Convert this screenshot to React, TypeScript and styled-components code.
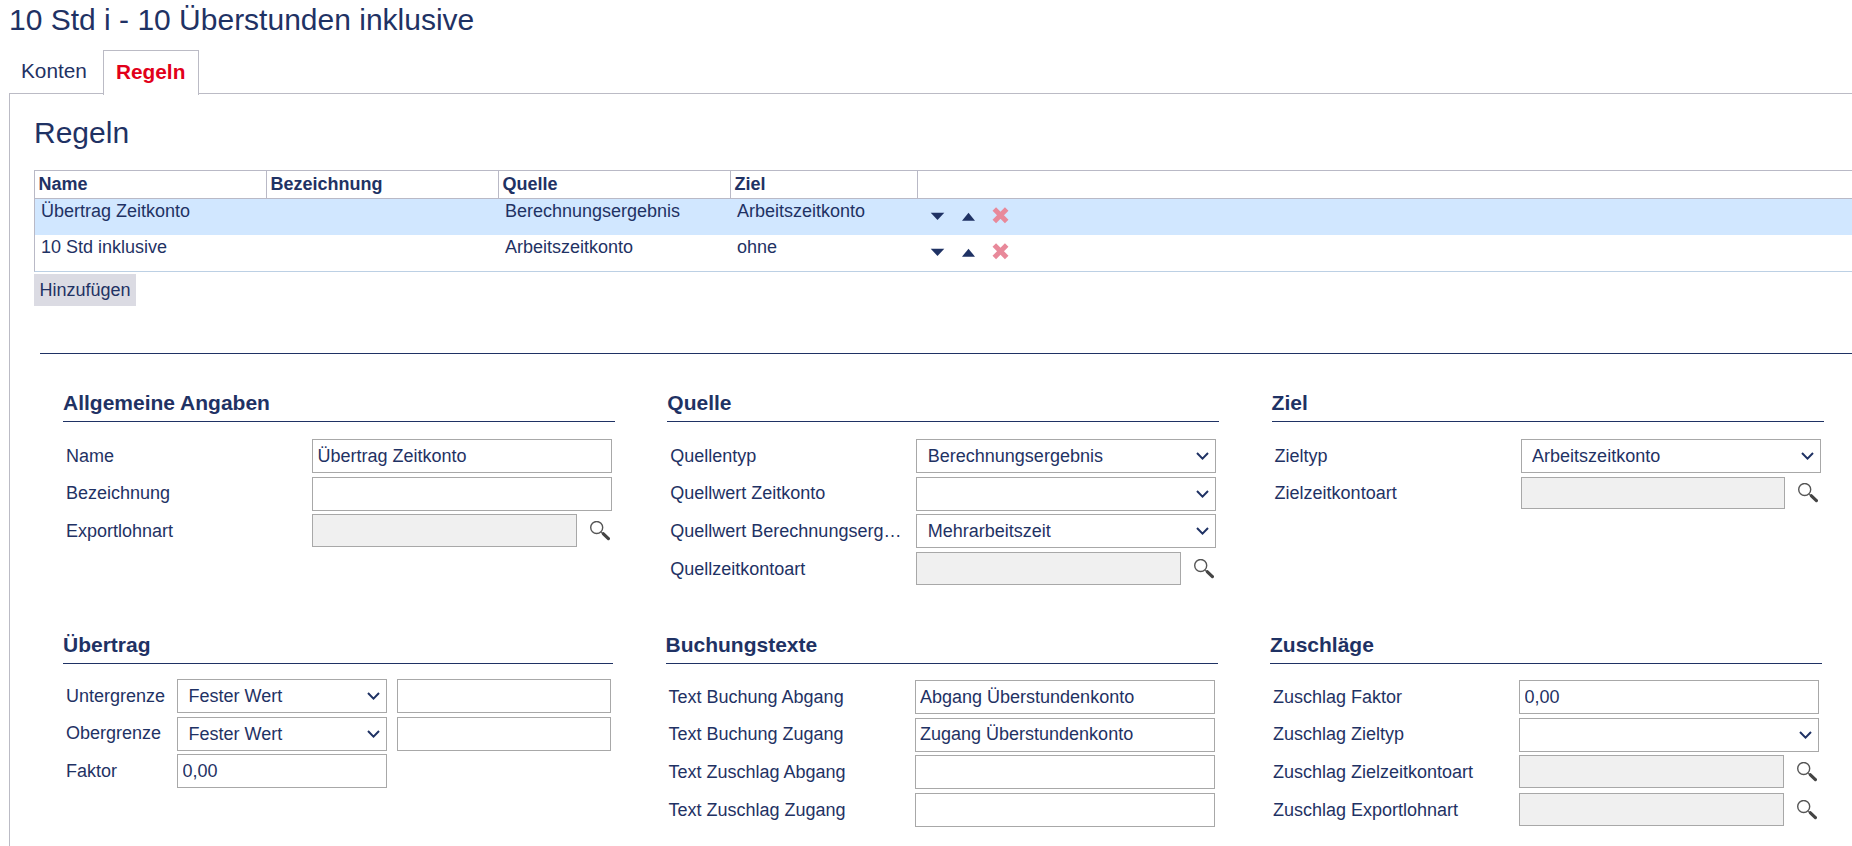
import React from "react";
import styled, { createGlobalStyle } from "styled-components";

const INK = "#1f3264";

const Global = createGlobalStyle`
  html, body { margin: 0; padding: 0; background: #fff; }
  body { font-family: "Liberation Sans", Arial, sans-serif; color: ${INK}; font-size: 18px; }
`;

const Page = styled.div`
  width: 1852px;
  height: 846px;
  overflow: hidden;
  background: #fff;
`;
const Title = styled.h1`
  margin: 0;
  padding: 3px 0 0 9px;
  height: 50px;
  box-sizing: border-box;
  font-size: 30px;
  line-height: 34px;
  font-weight: 400;
`;
const Tabs = styled.div`
  display: flex;
  padding-left: 9px;
  height: 43px;
`;
const Tab = styled.div<{ $active?: boolean }>`
  box-sizing: border-box;
  height: ${(p) => (p.$active ? "45px" : "43px")};
  width: ${(p) => (p.$active ? "96px" : "94px")};
  padding-left: 12px;
  padding-top: 9px;
  font-size: 20.8px;
  line-height: 24px;
  font-weight: ${(p) => (p.$active ? 700 : 400)};
  color: ${(p) => (p.$active ? "#e2001a" : INK)};
  background: #fff;
  position: relative;
  z-index: 1;
  border: ${(p) => (p.$active ? "1px solid #bbbbc5" : "none")};
  border-bottom: none;
`;
const Panel = styled.div`
  margin-left: 9px;
  height: 753px;
  box-sizing: border-box;
  border-top: 1px solid #bbbbc5;
  border-left: 1px solid #bbbbc5;
  padding: 22px 0 0 24px;
`;
const PanelTitle = styled.h2`
  margin: 0 0 19.5px;
  font-size: 30px;
  line-height: 34px;
  font-weight: 400;
`;
const RuleTable = styled.table`
  table-layout: fixed;
  width: 1818px;
  border-collapse: separate;
  border-spacing: 0;
  border-left: 1px solid #b9b9c6;
  border-bottom: 1px solid #bcd0e4;
  color: ${INK};
`;
const HeadCell = styled.th<{ $w?: number }>`
  width: ${(p) => (p.$w ? `${p.$w}px` : "auto")};
  box-sizing: border-box;
  height: 29px;
  padding: 3px 0 0 3.5px;
  text-align: left;
  vertical-align: top;
  font-size: 18px;
  line-height: 21px;
  font-weight: 700;
  border-top: 1px solid #b9b9c6;
  border-bottom: 1px solid #b9b9c6;
  border-right: ${(p) => (p.$w ? "1px solid #b9b9c6" : "none")};
`;
const Row = styled.tr<{ $selected?: boolean }>`
  background: ${(p) => (p.$selected ? "#d1e7ff" : "#fff")};
`;
const Cell = styled.td`
  height: 36px;
  box-sizing: border-box;
  padding: 2px 0 0 6px;
  vertical-align: top;
  font-size: 18px;
  line-height: 21px;
`;
const ActionCell = styled.td`
  height: 36px;
  box-sizing: border-box;
  padding: 8px 0 0 12px;
  vertical-align: top;
`;
const Actions = styled.div`
  display: flex;
  gap: 14px;
`;
const ActionIcon = styled.svg`
  display: block;
  width: 17px;
  height: 17px;
`;
const AddButton = styled.button`
  display: block;
  margin: 2.5px 0 0;
  width: 102px;
  height: 32px;
  padding: 0;
  border: none;
  background: #dbdbe3;
  color: ${INK};
  font: 18px/21px "Liberation Sans", Arial, sans-serif;
`;
const Divider = styled.div`
  margin: 47px 0 0 6px;
  height: 1px;
  background: ${INK};
`;
const FormRow = styled.div<{ $gap: number; $first?: boolean }>`
  display: flex;
  gap: ${(p) => p.$gap}px;
  margin-left: 29px;
  margin-top: ${(p) => (p.$first ? "37px" : "47px")};
`;
const Section = styled.section<{ $w: number }>`
  width: ${(p) => p.$w}px;
  flex: none;
`;
const SectionTitle = styled.h3`
  margin: 0;
  box-sizing: border-box;
  height: 31px;
  border-bottom: 1px solid ${INK};
  font-size: 21px;
  line-height: 24px;
  font-weight: 700;
`;
const FieldList = styled.div<{ $top: number }>`
  display: flex;
  flex-direction: column;
  gap: 3.7px;
  padding-top: ${(p) => p.$top}px;
`;
const Field = styled.div`
  display: grid;
  grid-template-columns: 249px 300px;
  height: 34px;
  align-items: start;
`;
const CarryField = styled.div`
  display: grid;
  grid-template-columns: 114px 210px 224px;
  height: 34px;
  align-items: start;
`;
const Label = styled.label`
  display: block;
  padding: 5.5px 10px 0 3px;
  line-height: 22px;
  font-size: 18px;
  white-space: nowrap;
  overflow: hidden;
  text-overflow: ellipsis;
`;
const TextInput = styled.input`
  box-sizing: border-box;
  display: block;
  width: 100%;
  height: 34px;
  margin: 0;
  padding: 0 0 0 4.5px;
  border: 1px solid #a8a8a8;
  border-radius: 0;
  outline: none;
  background: #fff;
  color: ${INK};
  font: 18px "Liberation Sans", Arial, sans-serif;
`;
const CarryValue = styled(TextInput)`
  margin-left: 10px;
  width: calc(100% - 10px);
`;
const LookupWrap = styled.div`
  display: flex;
  width: 100%;
`;
const LockedInput = styled.input`
  box-sizing: border-box;
  display: block;
  width: 264.5px;
  height: 32.5px;
  margin: 0;
  padding: 0;
  border: 1px solid #a8a8a8;
  border-radius: 0;
  background: #f0f0f0;
`;
const SearchIcon = styled.svg`
  display: block;
  width: 20px;
  height: 20px;
  margin: 6.5px 0 0 13px;
`;
const SelectWrap = styled.div`
  position: relative;
  width: 100%;
  height: 34px;
`;
const Select = styled.select`
  box-sizing: border-box;
  display: block;
  width: 100%;
  height: 34px;
  margin: 0;
  padding: 0 24px 0 10.5px;
  appearance: none;
  border: 1px solid #a8a8a8;
  border-radius: 0;
  outline: none;
  background: #fff;
  color: ${INK};
  font: 18px "Liberation Sans", Arial, sans-serif;
`;
const Chevron = styled.svg`
  position: absolute;
  right: 7px;
  top: 13px;
  width: 13px;
  height: 8px;
  pointer-events: none;
`;

const DownIcon = () => (
  <ActionIcon viewBox="0 0 17 17">
    <polygon points="0.7,5.7 14.3,5.7 7.5,13" fill={INK} />
  </ActionIcon>
);
const UpIcon = () => (
  <ActionIcon viewBox="0 0 17 17">
    <polygon points="1,13.7 14,13.7 7.5,5.7" fill={INK} />
  </ActionIcon>
);
const RemoveIcon = () => (
  <ActionIcon viewBox="0 0 17 17">
    <path d="M2.3 2 L14.7 14.4 M14.7 2 L2.3 14.4" stroke="#e8899a" strokeWidth="5" fill="none" />
  </ActionIcon>
);
const Magnifier = () => (
  <SearchIcon viewBox="0 0 20 20">
    <circle cx="6.7" cy="6.5" r="6" fill="#fff" stroke="#555" strokeWidth="1.4" />
    <path d="M10.8 10.8 L13 12.8" stroke="#666" strokeWidth="1.5" fill="none" />
    <path d="M13.4 12.8 L18.4 17.6" stroke="#444" strokeWidth="3.2" strokeLinecap="round" fill="none" />
  </SearchIcon>
);

const DropDown = ({ value }: { value: string }) => (
  <SelectWrap>
    <Select defaultValue={value}>
      <option value={value}>{value}</option>
    </Select>
    <Chevron viewBox="0 0 13 8">
      <polyline points="1,1 6.5,6.6 12,1" fill="none" stroke={INK} strokeWidth="2" />
    </Chevron>
  </SelectWrap>
);
const Lookup = () => (
  <LookupWrap>
    <LockedInput disabled />
    <Magnifier />
  </LookupWrap>
);

type FieldDef = { label: string; kind: "text" | "select" | "lookup"; value?: string };

const FormField = ({ label, kind, value = "" }: FieldDef) => (
  <Field>
    <Label>{label}</Label>
    {kind === "text" && <TextInput readOnly value={value} />}
    {kind === "select" && <DropDown value={value} />}
    {kind === "lookup" && <Lookup />}
  </Field>
);

const FormSection = ({ title, w, top, fields }: { title: string; w: number; top: number; fields: FieldDef[] }) => (
  <Section $w={w}>
    <SectionTitle>{title}</SectionTitle>
    <FieldList $top={top}>
      {fields.map((f) => (
        <FormField key={f.label} {...f} />
      ))}
    </FieldList>
  </Section>
);

const rules = [
  { name: "Übertrag Zeitkonto", source: "Berechnungsergebnis", target: "Arbeitszeitkonto", selected: true },
  { name: "10 Std inklusive", source: "Arbeitszeitkonto", target: "ohne", selected: false },
];

export default function App() {
  return (
    <Page>
      <Global />
      <Title>10 Std i - 10 Überstunden inklusive</Title>
      <Tabs>
        <Tab>Konten</Tab>
        <Tab $active>Regeln</Tab>
      </Tabs>
      <Panel>
        <PanelTitle>Regeln</PanelTitle>
        <RuleTable>
          <thead>
            <tr>
              <HeadCell $w={232}>Name</HeadCell>
              <HeadCell $w={232}>Bezeichnung</HeadCell>
              <HeadCell $w={232}>Quelle</HeadCell>
              <HeadCell $w={187}>Ziel</HeadCell>
              <HeadCell />
            </tr>
          </thead>
          <tbody>
            {rules.map((r) => (
              <Row key={r.name} $selected={r.selected}>
                <Cell>{r.name}</Cell>
                <Cell />
                <Cell>{r.source}</Cell>
                <Cell>{r.target}</Cell>
                <ActionCell>
                  <Actions>
                    <DownIcon />
                    <UpIcon />
                    <RemoveIcon />
                  </Actions>
                </ActionCell>
              </Row>
            ))}
          </tbody>
        </RuleTable>
        <AddButton>Hinzufügen</AddButton>
        <Divider />
        <FormRow $gap={52.3} $first>
          <FormSection
            title="Allgemeine Angaben"
            w={552}
            top={17}
            fields={[
              { label: "Name", kind: "text", value: "Übertrag Zeitkonto" },
              { label: "Bezeichnung", kind: "text" },
              { label: "Exportlohnart", kind: "lookup" },
            ]}
          />
          <FormSection
            title="Quelle"
            w={552}
            top={17}
            fields={[
              { label: "Quellentyp", kind: "select", value: "Berechnungsergebnis" },
              { label: "Quellwert Zeitkonto", kind: "select" },
              { label: "Quellwert Berechnungsergebnis", kind: "select", value: "Mehrarbeitszeit" },
              { label: "Quellzeitkontoart", kind: "lookup" },
            ]}
          />
          <FormSection
            title="Ziel"
            w={552.5}
            top={17}
            fields={[
              { label: "Zieltyp", kind: "select", value: "Arbeitszeitkonto" },
              { label: "Zielzeitkontoart", kind: "lookup" },
            ]}
          />
        </FormRow>
        <FormRow $gap={52.5}>
          <Section $w={550}>
            <SectionTitle>Übertrag</SectionTitle>
            <FieldList $top={15}>
              <CarryField>
                <Label>Untergrenze</Label>
                <DropDown value="Fester Wert" />
                <CarryValue readOnly value="" />
              </CarryField>
              <CarryField>
                <Label>Obergrenze</Label>
                <DropDown value="Fester Wert" />
                <CarryValue readOnly value="" />
              </CarryField>
              <CarryField>
                <Label>Faktor</Label>
                <TextInput readOnly value="0,00" />
              </CarryField>
            </FieldList>
          </Section>
          <FormSection
            title="Buchungstexte"
            w={552}
            top={16}
            fields={[
              { label: "Text Buchung Abgang", kind: "text", value: "Abgang Überstundenkonto" },
              { label: "Text Buchung Zugang", kind: "text", value: "Zugang Überstundenkonto" },
              { label: "Text Zuschlag Abgang", kind: "text" },
              { label: "Text Zuschlag Zugang", kind: "text" },
            ]}
          />
          <FormSection
            title="Zuschläge"
            w={552}
            top={16}
            fields={[
              { label: "Zuschlag Faktor", kind: "text", value: "0,00" },
              { label: "Zuschlag Zieltyp", kind: "select" },
              { label: "Zuschlag Zielzeitkontoart", kind: "lookup" },
              { label: "Zuschlag Exportlohnart", kind: "lookup" },
            ]}
          />
        </FormRow>
      </Panel>
    </Page>
  );
}
